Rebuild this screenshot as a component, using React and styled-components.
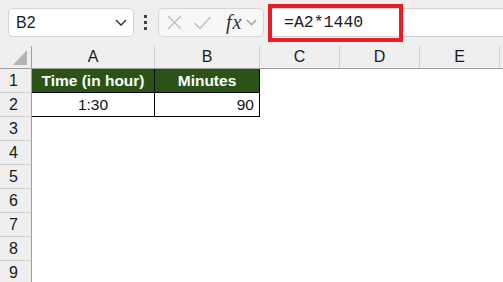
import React from "react";
import styled, { createGlobalStyle } from "styled-components";

const GlobalStyle = createGlobalStyle`
  html, body {
    margin: 0;
    padding: 0;
    background: #ffffff;
    font-family: "Liberation Sans", Arial, sans-serif;
  }
`;

const Page = styled.div`
  width: 503px;
  height: 282px;
  overflow: hidden;
  background: #ffffff;
`;

const TopBar = styled.div`
  display: flex;
  align-items: center;
  height: 46px;
  box-sizing: border-box;
  padding: 8px 0 9px 8px;
  background: #efefef;
`;

const NameBox = styled.div`
  display: flex;
  align-items: center;
  justify-content: space-between;
  box-sizing: border-box;
  width: 126px;
  height: 29px;
  padding: 0 6px 0 7px;
  background: #ffffff;
  border: 1px solid #d6d6d6;
  border-radius: 5px;
  font-size: 16px;
  color: #1a1a1a;
`;

const Dots = styled.div`
  display: flex;
  flex-direction: column;
  gap: 3px;
  margin: 0 11px 0 10px;

  span {
    width: 3px;
    height: 3px;
    background: #444;
  }
`;

const Tools = styled.div`
  display: flex;
  align-items: center;
  box-sizing: border-box;
  width: 106px;
  height: 29px;
  padding: 0 4px 0 7px;
  gap: 10px;
  background: #f7f7f7;
  border: 1px solid #d6d6d6;
  border-radius: 5px;
`;

const Fx = styled.span`
  font-family: "Liberation Serif", "Times New Roman", serif;
  font-style: italic;
  font-size: 20px;
  color: #333;
  margin-left: 4px;
  margin-right: -6px;
  letter-spacing: 1px;
`;

const FormulaInput = styled.div`
  position: relative;
  flex: 1;
  height: 29px;
  margin-left: 4px;
  display: flex;
  align-items: center;
  box-sizing: border-box;
  padding-left: 16px;
  background: #ffffff;
  border-top: 1px solid #d2d2d2;
  border-bottom: 1px solid #d2d2d2;
  font-family: "Liberation Mono", "DejaVu Sans Mono", monospace;
  font-size: 16.5px;
  color: #1a1a1a;
`;

const Highlight = styled.div`
  position: absolute;
  left: 0;
  top: -5px;
  width: 135px;
  height: 38px;
  box-sizing: border-box;
  border: 4px solid #ec1c24;
`;

const Sheet = styled.div`
  display: grid;
  grid-template-columns: 32px 123px 105px repeat(4, 80px);
  grid-template-rows: 23px;
  grid-auto-rows: 24px;
`;

const Corner = styled.div`
  position: relative;
  background: #efefef;
  border-right: 1px solid #9e9e9e;
  border-bottom: 1px solid #9e9e9e;
  box-sizing: border-box;

  &::after {
    content: "";
    position: absolute;
    right: 4px;
    bottom: 3px;
    width: 0;
    height: 0;
    border-left: 14px solid transparent;
    border-bottom: 15px solid #b4b4b4;
  }
`;

const ColHead = styled.div`
  display: flex;
  align-items: center;
  justify-content: center;
  box-sizing: border-box;
  background: #efefef;
  border-right: 1px solid #cfcfcf;
  border-bottom: 1px solid #9e9e9e;
  font-size: 16px;
  color: #1a1a1a;
`;

const RowHead = styled.div`
  display: flex;
  align-items: center;
  justify-content: center;
  box-sizing: border-box;
  padding-right: 4px;
  background: #efefef;
  border-right: 1px solid #9e9e9e;
  border-bottom: 1px solid #cfcfcf;
  font-size: 16px;
  color: #1a1a1a;
`;

const Cell = styled.div`
  display: flex;
  align-items: center;
  justify-content: ${(p) => (p.$align === "right" ? "flex-end" : p.$align === "center" ? "center" : "flex-start")};
  box-sizing: border-box;
  padding: 0 5px;
  font-size: 15.5px;
  color: #111;
  background: ${(p) => (p.$head ? "#2b5318" : "#ffffff")};
  ${(p) => p.$head && "color: #ffffff; font-weight: bold;"}
  ${(p) => p.$boxed && "border-right: 1px solid #000; border-bottom: 1px solid #000;"}
`;

const Close = () => (
  <svg width="17" height="17" viewBox="0 0 17 17">
    <path d="M2 2 L15 15 M15 2 L2 15" stroke="#bdbdbd" strokeWidth="1.3" fill="none" />
  </svg>
);

const Check = () => (
  <svg width="19" height="15" viewBox="0 0 19 15">
    <path d="M1.5 8 L7 13.5 L17.5 2" stroke="#bdbdbd" strokeWidth="1.3" fill="none" />
  </svg>
);

const Chevron = ({ size = 12, color = "#333" }) => (
  <svg width={size} height={size * 0.6} viewBox="0 0 12 7">
    <path d="M1 1 L6 6 L11 1" stroke={color} strokeWidth="1.4" fill="none" />
  </svg>
);

const columns = ["A", "B", "C", "D", "E"];

const data = {
  1: [
    { text: "Time (in hour)", align: "center", head: true },
    { text: "Minutes", align: "center", head: true },
  ],
  2: [
    { text: "1:30", align: "center" },
    { text: "90", align: "right" },
  ],
};

export default function App() {
  const rows = [1, 2, 3, 4, 5, 6, 7, 8, 9];
  return (
    <Page>
      <GlobalStyle />
      <TopBar>
        <NameBox>
          <span>B2</span>
          <Chevron size={12} color="#333" />
        </NameBox>
        <Dots>
          <span />
          <span />
          <span />
        </Dots>
        <Tools>
          <Close />
          <Check />
          <Fx>fx</Fx>
          <Chevron size={11} color="#9a9a9a" />
        </Tools>
        <FormulaInput>
          =A2*1440
          <Highlight />
        </FormulaInput>
      </TopBar>
      <Sheet>
        <Corner />
        {columns.map((c) => (
          <ColHead key={c}>{c}</ColHead>
        ))}
        <ColHead />
        {rows.map((r) => (
          <React.Fragment key={r}>
            <RowHead>{r}</RowHead>
            {columns.concat([""]).map((c, i) => {
              const cell = data[r] && data[r][i];
              return cell ? (
                <Cell key={i} $align={cell.align} $head={cell.head} $boxed>
                  {cell.text}
                </Cell>
              ) : (
                <Cell key={i} />
              );
            })}
          </React.Fragment>
        ))}
      </Sheet>
    </Page>
  );
}
